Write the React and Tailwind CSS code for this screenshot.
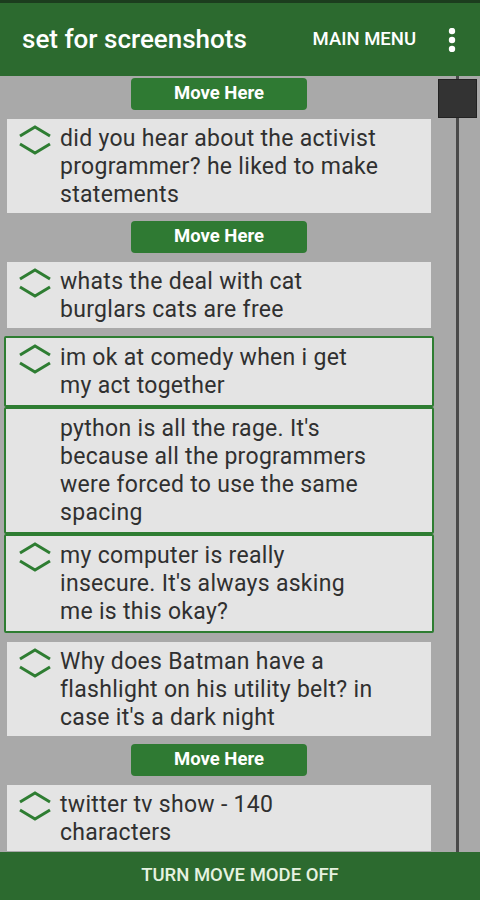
import { Fragment } from "react";

const jokes = [
  { type: "move" },
  { type: "card", text: "did you hear about the activist programmer? he liked to make statements" },
  { type: "move" },
  { type: "card", text: "whats the deal with cat burglars cats are free" },
  {
    type: "group",
    items: [
      { text: "im ok at comedy when i get my act together", handle: true },
      { text: "python is all the rage. It's because all the programmers were forced to use the same spacing", handle: false },
      { text: "my computer is really insecure. It's always asking me is this okay?", handle: true },
    ],
  },
  { type: "card", text: "Why does Batman have a flashlight on his utility belt? in case it's a dark night" },
  { type: "move" },
  { type: "card", text: "twitter tv show - 140 characters" },
];

function Handle() {
  return (
    <svg width="34" height="30" viewBox="0 0 34 30" fill="none" className="shrink-0">
      <path d="M2 11 L17 2 L32 11" stroke="#2e7d32" strokeWidth="3" />
      <path d="M2 19 L17 28 L32 19" stroke="#2e7d32" strokeWidth="3" />
    </svg>
  );
}

function JokeText({ text, handle = true }) {
  return (
    <div className="flex gap-[8px]">
      {handle ? <Handle /> : <div className="w-[34px] shrink-0" />}
      <p className="w-[321px] text-[23px] leading-[28px] tracking-[0.3px] text-[#303030]">{text}</p>
    </div>
  );
}

function MoveHere() {
  return (
    <div className="flex justify-center">
      <button className="w-[176px] h-[32px] rounded-[4px] bg-[#2f7a33] text-white text-[18.5px] font-bold">
        Move Here
      </button>
    </div>
  );
}

export default function App() {
  return (
    <div
      className="w-[480px] h-[900px] flex flex-col overflow-hidden bg-[#a9a9a9]"
      style={{ fontFamily: "Roboto, 'Noto Sans', sans-serif" }}
    >
      <div className="h-[3px] bg-[#1c3d1e]" />
      <header className="h-[73px] shrink-0 bg-[#2c6a2f] flex items-center pl-[22px] pr-[24px]">
        <h1 className="text-[26px] font-medium text-white flex-1">set for screenshots</h1>
        <span className="text-[18.5px] font-medium text-white mr-[32px]">MAIN MENU</span>
        <svg width="8" height="24" viewBox="0 0 8 24">
          <circle cx="4" cy="3" r="3.2" fill="white" />
          <circle cx="4" cy="12" r="3.2" fill="white" />
          <circle cx="4" cy="21" r="3.2" fill="white" />
        </svg>
      </header>

      <main className="flex-1 flex overflow-hidden">
        <div className="w-[438px] shrink-0 pl-[7px] pr-[7px] pt-[2px] flex flex-col gap-[8.5px]">
          {jokes.map((j, i) => (
            <Fragment key={i}>
              {j.type === "move" && <MoveHere />}
              {j.type === "card" && (
                <div className="bg-[#e4e4e4] pl-[11px] pt-[6px] pb-[4px] shrink-0">
                  <JokeText text={j.text} />
                </div>
              )}
              {j.type === "group" && (
                <div className="-mx-[3px] flex flex-col shrink-0">
                  {j.items.map((it, k) => (
                    <div key={k} className="bg-[#e4e4e4] border-2 border-[#2e7d32] rounded-[2px] pl-[12px] pt-[6px] pb-[5px]">
                      <JokeText text={it.text} handle={it.handle} />
                    </div>
                  ))}
                </div>
              )}
            </Fragment>
          ))}
        </div>

        <div className="flex-1 relative pl-[18px]">
          <div className="w-[3px] h-full bg-[#4a4a4a]" />
          <div className="absolute top-[3px] left-0 w-[39px] h-[39px] bg-[#333333] border border-[#222222]" />
        </div>
      </main>

      <footer className="h-[48px] shrink-0 bg-[#2c6a2f] flex items-center justify-center">
        <span className="text-[18.5px] font-medium text-[#e6f2e0]">TURN MOVE MODE OFF</span>
      </footer>
    </div>
  );
}
